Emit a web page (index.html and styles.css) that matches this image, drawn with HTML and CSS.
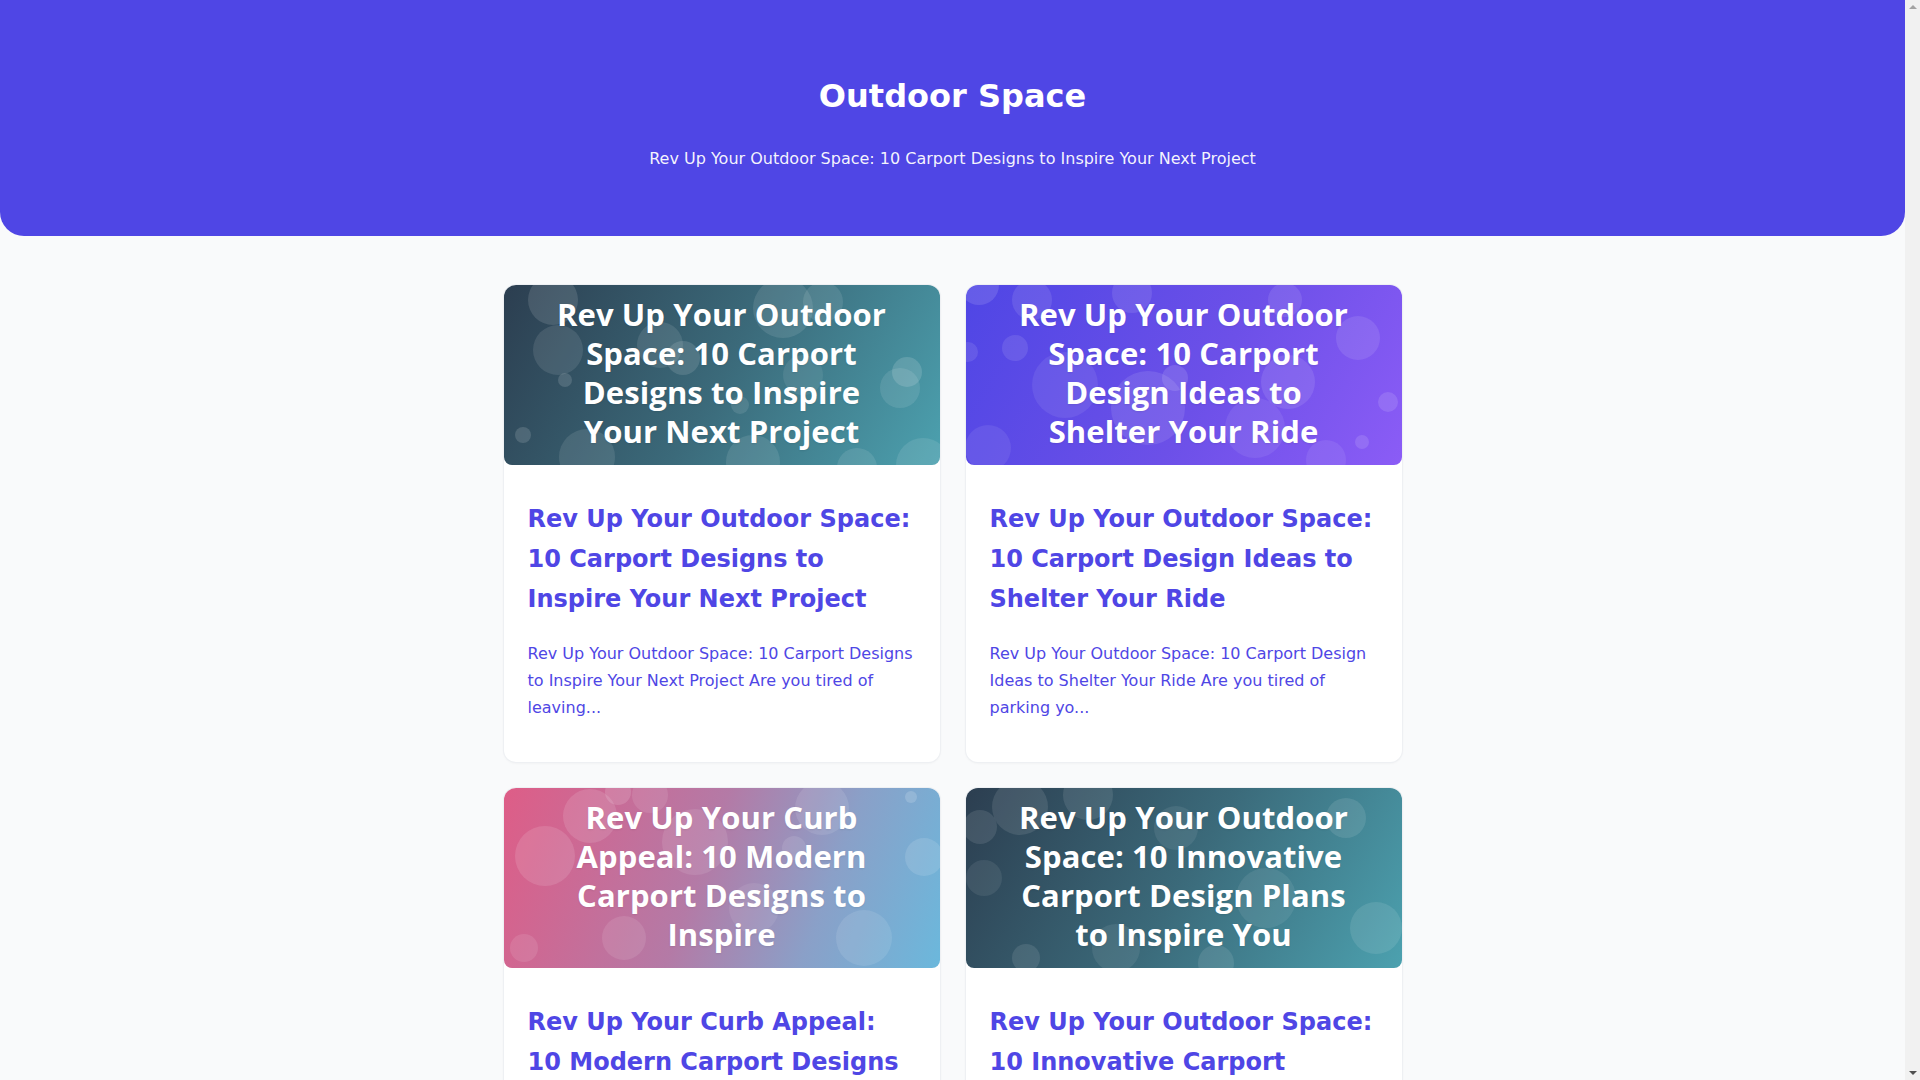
FILE: index.html
```html
<!DOCTYPE html>
<html lang="en">
<head>
<meta charset="utf-8">
<title>Outdoor Space</title>
<link rel="stylesheet" href="styles.css">
</head>
<body>
<header class="hero">
  <h1 class="hero-title">Outdoor Space</h1>
  <p class="hero-sub">Rev Up Your Outdoor Space: 10 Carport Designs to Inspire Your Next Project</p>
</header>

<main class="grid">
  <article class="card">
    <div class="thumb thumb-sea">
      <svg class="bokeh" viewBox="0 0 436 180" preserveAspectRatio="none">
        <g fill="#fff">
          <circle cx="49" cy="15" r="25" opacity=".12"/>
          <circle cx="54" cy="65" r="25" opacity=".10"/>
          <circle cx="61" cy="95" r="7" opacity=".14"/>
          <circle cx="19" cy="150" r="8" opacity=".14"/>
          <circle cx="83" cy="172" r="28" opacity=".10"/>
          <circle cx="156" cy="60" r="23" opacity=".10"/>
          <circle cx="179" cy="73" r="17" opacity=".12"/>
          <circle cx="279" cy="23" r="30" opacity=".10"/>
          <circle cx="319" cy="17" r="20" opacity=".10"/>
          <circle cx="403" cy="87" r="15" opacity=".14"/>
          <circle cx="396" cy="103" r="20" opacity=".10"/>
          <circle cx="299" cy="90" r="20" opacity=".08"/>
          <circle cx="249" cy="177" r="27" opacity=".10"/>
          <circle cx="419" cy="180" r="27" opacity=".10"/>
          <circle cx="353" cy="183" r="20" opacity=".10"/>
          <circle cx="236" cy="120" r="9" opacity=".10"/>
        </g>
      </svg>
      <div class="thumb-text">Rev Up Your Outdoor<br>Space: 10 Carport<br>Designs to Inspire<br>Your Next Project</div>
    </div>
    <div class="card-body">
      <h2 class="card-title">Rev Up Your Outdoor Space: 10 Carport Designs to Inspire Your Next Project</h2>
      <p class="card-desc">Rev Up Your Outdoor Space: 10 Carport Designs to Inspire Your Next Project Are you tired of leaving...</p>
    </div>
  </article>

  <article class="card">
    <div class="thumb thumb-violet">
      <svg class="bokeh" viewBox="0 0 436 180" preserveAspectRatio="none">
        <g fill="#fff">
          <circle cx="13" cy="0" r="20" opacity=".12"/>
          <circle cx="66" cy="15" r="20" opacity=".10"/>
          <circle cx="49" cy="63" r="13" opacity=".10"/>
          <circle cx="2" cy="67" r="10" opacity=".10"/>
          <circle cx="99" cy="100" r="33" opacity=".08"/>
          <circle cx="182" cy="123" r="37" opacity=".10"/>
          <circle cx="209" cy="93" r="13" opacity=".12"/>
          <circle cx="289" cy="143" r="30" opacity=".08"/>
          <circle cx="322" cy="97" r="27" opacity=".10"/>
          <circle cx="392" cy="53" r="22" opacity=".10"/>
          <circle cx="319" cy="15" r="17" opacity=".10"/>
          <circle cx="422" cy="117" r="10" opacity=".12"/>
          <circle cx="396" cy="157" r="7" opacity=".12"/>
          <circle cx="22" cy="163" r="23" opacity=".08"/>
          <circle cx="166" cy="8" r="20" opacity=".10"/>
          <circle cx="360" cy="175" r="20" opacity=".08"/>
        </g>
      </svg>
      <div class="thumb-text">Rev Up Your Outdoor<br>Space: 10 Carport<br>Design Ideas to<br>Shelter Your Ride</div>
    </div>
    <div class="card-body">
      <h2 class="card-title">Rev Up Your Outdoor Space: 10 Carport Design Ideas to Shelter Your Ride</h2>
      <p class="card-desc">Rev Up Your Outdoor Space: 10 Carport Design Ideas to Shelter Your Ride Are you tired of parking yo...</p>
    </div>
  </article>

  <article class="card">
    <div class="thumb thumb-pink">
      <svg class="bokeh" viewBox="0 0 436 180" preserveAspectRatio="none">
        <g fill="#fff">
          <circle cx="114" cy="4" r="13" opacity=".14"/>
          <circle cx="86" cy="28" r="27" opacity=".12"/>
          <circle cx="41" cy="68" r="30" opacity=".12"/>
          <circle cx="146" cy="7" r="18" opacity=".10"/>
          <circle cx="191" cy="54" r="33" opacity=".10"/>
          <circle cx="318" cy="20" r="27" opacity=".10"/>
          <circle cx="407" cy="9" r="6" opacity=".16"/>
          <circle cx="420" cy="69" r="19" opacity=".12"/>
          <circle cx="250" cy="120" r="25" opacity=".08"/>
          <circle cx="120" cy="150" r="22" opacity=".10"/>
          <circle cx="20" cy="160" r="14" opacity=".10"/>
          <circle cx="360" cy="150" r="28" opacity=".10"/>
          <circle cx="290" cy="60" r="12" opacity=".10"/>
        </g>
      </svg>
      <div class="thumb-text">Rev Up Your Curb<br>Appeal: 10 Modern<br>Carport Designs to<br>Inspire</div>
    </div>
    <div class="card-body">
      <h2 class="card-title">Rev Up Your Curb Appeal: 10 Modern Carport Designs to Inspire</h2>
      <p class="card-desc">Rev Up Your Curb Appeal: 10 Modern Carport Designs to Inspire Are you looking to give your home a...</p>
    </div>
  </article>

  <article class="card">
    <div class="thumb thumb-sea">
      <svg class="bokeh" viewBox="0 0 436 180" preserveAspectRatio="none">
        <g fill="#fff">
          <circle cx="54" cy="19" r="28" opacity=".10"/>
          <circle cx="14" cy="39" r="17" opacity=".10"/>
          <circle cx="122" cy="7" r="25" opacity=".10"/>
          <circle cx="18" cy="90" r="18" opacity=".08"/>
          <circle cx="210" cy="40" r="22" opacity=".08"/>
          <circle cx="300" cy="110" r="30" opacity=".08"/>
          <circle cx="380" cy="30" r="20" opacity=".10"/>
          <circle cx="410" cy="140" r="26" opacity=".10"/>
          <circle cx="150" cy="160" r="24" opacity=".08"/>
          <circle cx="60" cy="170" r="14" opacity=".10"/>
          <circle cx="250" cy="175" r="18" opacity=".10"/>
        </g>
      </svg>
      <div class="thumb-text">Rev Up Your Outdoor<br>Space: 10 Innovative<br>Carport Design Plans<br>to Inspire You</div>
    </div>
    <div class="card-body">
      <h2 class="card-title">Rev Up Your Outdoor Space: 10 Innovative Carport Design Plans to Inspire You</h2>
      <p class="card-desc">Rev Up Your Outdoor Space: 10 Innovative Carport Design Plans to Inspire You Are you tired of...</p>
    </div>
  </article>
</main>

<div class="scrollbar" aria-hidden="true">
  <span class="arrow arrow-up"></span>
  <span class="arrow arrow-down"></span>
</div>
</body>
</html>
```

FILE: styles.css
```css
html {
  margin: 0;
  padding: 0;
  background: #f1f1f1;
}

body {
  margin: 0 15px 0 0;
  padding: 0 0 40px;
  background: #f9fafb;
  font-family: "DejaVu Sans", "Liberation Sans", sans-serif;
  color: #111827;
}

.scrollbar {
  position: fixed;
  top: 0;
  right: 0;
  width: 15px;
  height: 100vh;
  background: #f1f1f1;
  display: flex;
  flex-direction: column;
  justify-content: space-between;
  align-items: center;
  padding: 5px 0;
  box-sizing: border-box;
}

.arrow {
  width: 0;
  height: 0;
  border-left: 4px solid transparent;
  border-right: 4px solid transparent;
}

.arrow-up {
  border-bottom: 4px solid #a3a3a3;
}

.arrow-down {
  border-top: 4px solid #505050;
}

.hero {
  background: #4f46e5;
  color: #ffffff;
  text-align: center;
  padding: 76px 24px 65px;
  border-radius: 0 0 24px 24px;
}

.hero-title {
  margin: 0 0 31px;
  font-size: 32px;
  line-height: 40px;
  font-weight: 700;
}

.hero-sub {
  margin: 0;
  font-size: 16px;
  line-height: 24px;
  color: rgba(255, 255, 255, 0.94);
}

.grid {
  width: 898px;
  margin: 49px auto 0;
  display: grid;
  grid-template-columns: 1fr 1fr;
  column-gap: 26px;
  row-gap: 26px;
}

.card {
  background: #ffffff;
  border-radius: 12px;
  box-shadow: 0 0 0 1px #eef0f3, 0 1px 3px rgba(17, 24, 39, 0.06);
  overflow: hidden;
}

.thumb {
  display: grid;
  height: 180px;
  border-radius: 8px;
  overflow: hidden;
}

.thumb > * {
  grid-area: 1 / 1;
}

.thumb-sea {
  background: linear-gradient(120deg, #2c3e50 0%, #3b6a7a 50%, #4ca1af 100%);
}

.thumb-violet {
  background: linear-gradient(120deg, #4f46e5 0%, #6c50e8 55%, #8b5cf6 100%);
}

.thumb-pink {
  background: linear-gradient(110deg, #de5d87 0%, #b47aa6 45%, #8aa0c8 72%, #6bb8dc 100%);
}

.bokeh {
  width: 100%;
  height: 100%;
  display: block;
}

.thumb-text {
  align-self: center;
  justify-self: center;
  text-align: center;
  padding-bottom: 5px;
  color: #ffffff;
  font-family: "Open Sans", "Noto Sans", sans-serif;
  font-weight: 700;
  font-size: 31px;
  line-height: 39px;
  letter-spacing: 0.1px;
  text-shadow: 0 1px 2px rgba(0, 0, 0, 0.08);
}

.card-body {
  padding: 34px 24px 41px;
}

.card-title {
  margin: 0 0 21px;
  font-size: 24px;
  line-height: 40px;
  font-weight: 700;
  color: #4f46e5;
}

.card-desc {
  margin: 0;
  font-size: 16px;
  line-height: 27px;
  color: #4f46e5;
}
```
